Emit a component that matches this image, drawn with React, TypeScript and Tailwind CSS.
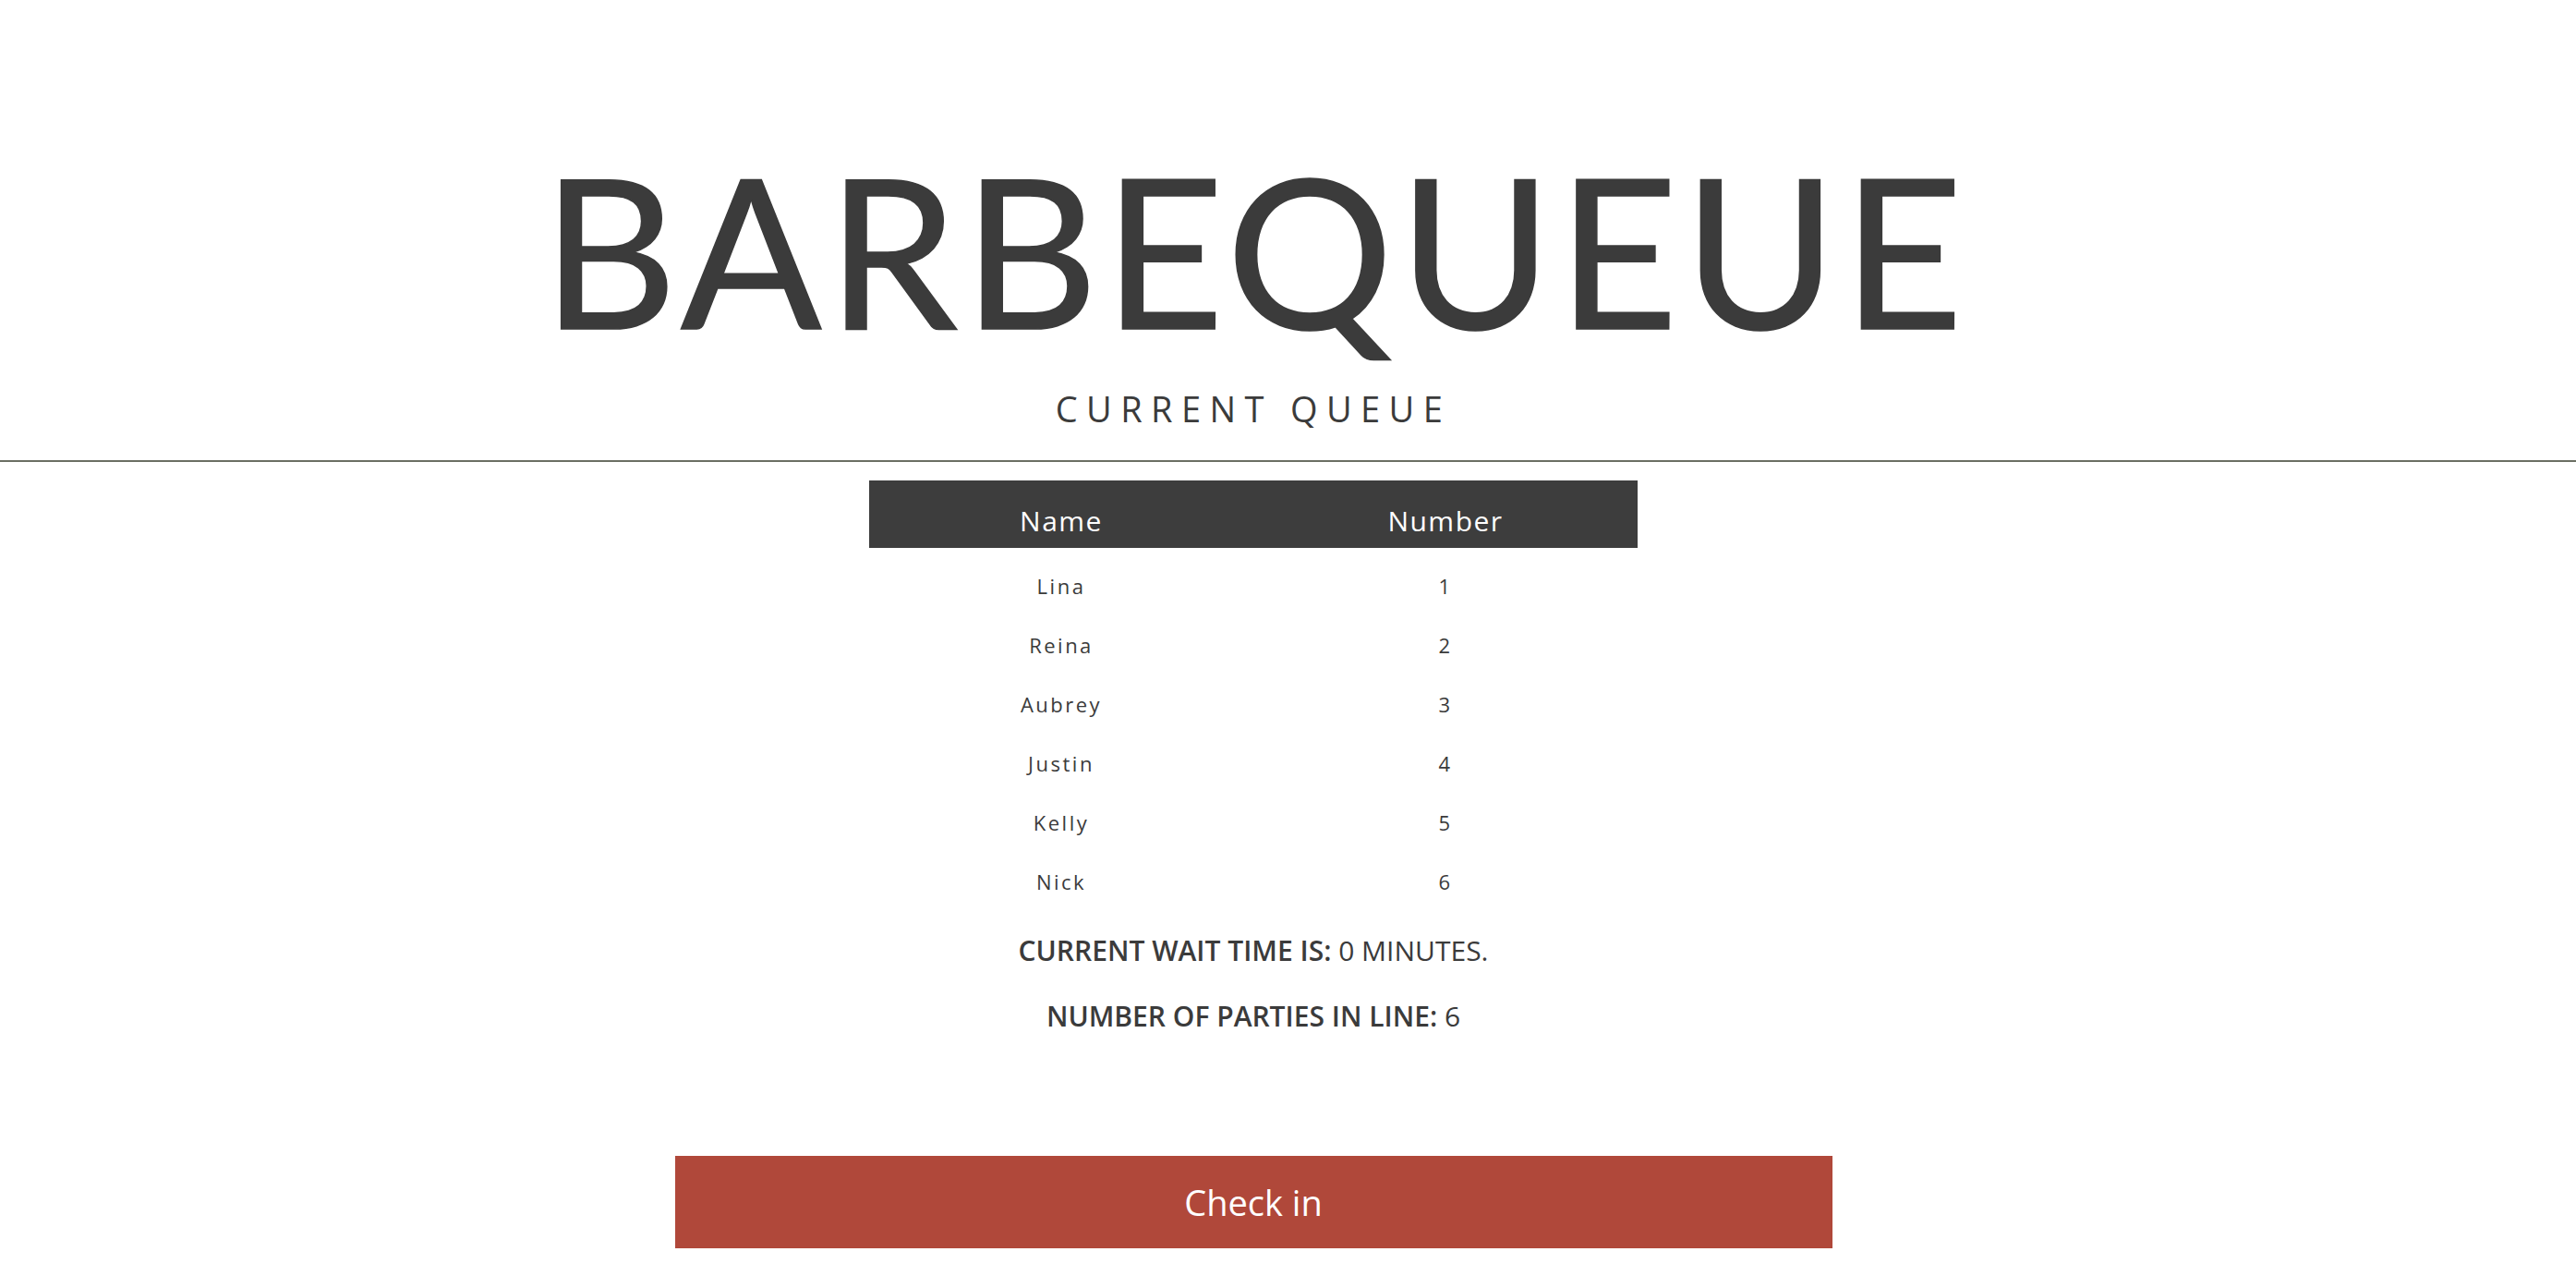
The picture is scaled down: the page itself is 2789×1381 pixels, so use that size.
import React from "react";

const rows: [string, number][] = [
  ["Lina", 1],
  ["Reina", 2],
  ["Aubrey", 3],
  ["Justin", 4],
  ["Kelly", 5],
  ["Nick", 6],
];

export default function App() {
  return (
    <div className="w-[2789px] min-h-[1381px] bg-white font-['Open_Sans',sans-serif] text-[#3b3b3b]">
      <div className="w-[2714px] flex flex-col items-center pt-[156px]">
        <h1 className="font-['Lato',sans-serif] text-[226px] leading-none font-normal tracking-[5.8px] pl-[4px] text-[#3b3b3b] [-webkit-text-stroke:1.5px_#3b3b3b]">
          BARBEQUEUE
        </h1>
        <h2 className="mt-[41px] text-[38px] leading-none font-normal tracking-[9.4px] text-[#3b3b3b]">
          CURRENT QUEUE
        </h2>
      </div>
      <div className="mt-[37px] w-full h-[2px] bg-[#6b6f63]" />
      <div className="w-[2714px] flex flex-col items-center pt-[20px]">
        <div className="w-[832px]">
          <div className="grid grid-cols-2 h-[73px] bg-[#3d3d3d] text-white text-[30px] leading-none tracking-[1.5px] pt-[29px]">
            <div className="text-center">Name</div>
            <div className="text-center">Number</div>
          </div>
          <div className="mt-[9px]">
            {rows.map(([name, n]) => (
              <div key={name} className="grid grid-cols-2 h-[64px] text-[22px] leading-[64px] tracking-[2.5px] text-[#3b3b3b]">
                <div className="text-center">{name}</div>
                <div className="text-center">{n}</div>
              </div>
            ))}
          </div>
        </div>
        <p className="mt-[28px] text-[30px] leading-none text-[#3b3b3b]">
          <span className="font-semibold">CURRENT WAIT TIME IS:</span> 0 MINUTES.
        </p>
        <p className="mt-[41px] text-[30px] leading-none text-[#3b3b3b]">
          <span className="font-semibold">NUMBER OF PARTIES IN LINE:</span> 6
        </p>
        <button className="mt-[136px] w-[1253px] h-[100px] bg-[#b0483a] text-white text-[38px] font-['Open_Sans',sans-serif]">
          Check in
        </button>
      </div>
    </div>
  );
}
